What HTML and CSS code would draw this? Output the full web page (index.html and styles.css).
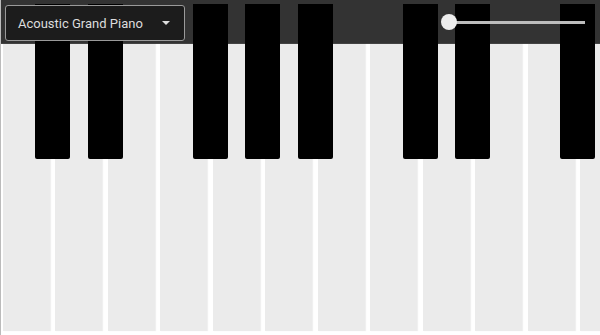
FILE: index.html
```html
<!DOCTYPE html>
<html lang="en">
<head>
    <meta charset="UTF-8">
    <meta name="viewport" content="width=device-width, initial-scale=1.0">
    <title>Piano</title>
    <link rel="stylesheet" href="styles.css">
</head>
<body>
    <div class="piano">
        <!-- Top bar with instrument picker and volume -->
        <div class="topbar">
            <div class="instrument-select">
                <span>Acoustic Grand Piano</span>
                <span class="caret"></span>
            </div>
            <div class="volume">
                <div class="volume-track"></div>
                <div class="volume-thumb"></div>
            </div>
        </div>

        <!-- White keys -->
        <div class="white-keys">
            <div class="white-key"></div>
            <div class="white-key"></div>
            <div class="white-key"></div>
            <div class="white-key"></div>
            <div class="white-key"></div>
            <div class="white-key"></div>
            <div class="white-key"></div>
            <div class="white-key"></div>
            <div class="white-key"></div>
            <div class="white-key"></div>
            <div class="white-key"></div>
            <div class="white-key"></div>
        </div>

        <!-- Black keys sit on the boundaries between white keys -->
        <div class="black-key" style="left: 35px"></div>
        <div class="black-key" style="left: 87.5px"></div>
        <div class="black-key" style="left: 192.5px"></div>
        <div class="black-key" style="left: 245px"></div>
        <div class="black-key" style="left: 297.5px"></div>
        <div class="black-key" style="left: 402.5px"></div>
        <div class="black-key" style="left: 455px"></div>
        <div class="black-key" style="left: 560px"></div>
    </div>
</body>
</html>
```

FILE: styles.css
```css
/* Global styles */
* {
    margin: 0;
    padding: 0;
    box-sizing: border-box;
}

body {
    font-family: Roboto, 'Liberation Sans', sans-serif;
    background: #fff;
    overflow: hidden;
}

.piano {
    position: relative;
    width: 600px;
    height: 335px;
    border-left: 1px solid #bbb;
}

/* Top bar */
.topbar {
    height: 44px;
    background: #333;
    border-bottom: 1px solid #444;
    display: flex;
    align-items: flex-start;
    padding: 5px 15px 0 4px;
}

.instrument-select {
    position: relative;
    z-index: 2;
    width: 180px;
    height: 36px;
    background: #1c1c1c;
    border: 1px solid #9a9a9a;
    border-radius: 3px;
    color: #ddd;
    font-size: 13px;
    display: flex;
    align-items: center;
    justify-content: space-between;
    padding: 0 13px 0 12px;
}

.caret {
    width: 0;
    height: 0;
    border-left: 4px solid transparent;
    border-right: 4px solid transparent;
    border-top: 4px solid #ddd;
    margin-right: 1px;
}

/* Volume slider */
.volume {
    position: relative;
    z-index: 2;
    margin-left: auto;
    margin-top: 9px;
    width: 144px;
    height: 16px;
    display: flex;
    align-items: center;
}

.volume-track {
    width: 100%;
    height: 3px;
    margin-left: 8px;
    background: #bdbdbd;
}

.volume-thumb {
    position: absolute;
    left: 0;
    top: 0;
    width: 16px;
    height: 16px;
    border-radius: 50%;
    background: #eee;
}

/* Keys */
.white-keys {
    display: flex;
    height: 287px;
}

.white-key {
    flex: 0 0 47px;
    margin: 0 2.75px;
    background: #ebebeb;
    box-shadow: 1px 0 1px rgba(0, 0, 0, 0.06);
}

.white-key:first-child {
    margin-left: 1.75px;
}

.black-key {
    position: absolute;
    z-index: 1;
    top: 4px;
    margin-left: -1px;
    width: 35px;
    height: 155px;
    background: #000;
    border-radius: 0 0 2px 2px;
}
```
